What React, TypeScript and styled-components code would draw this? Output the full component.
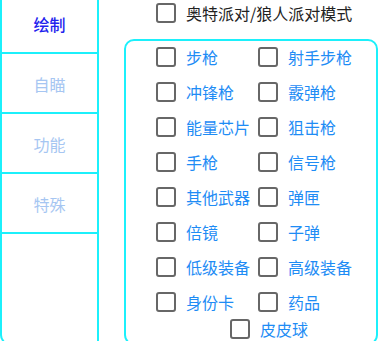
import React from "react";
import styled, { createGlobalStyle } from "styled-components";

const Global = createGlobalStyle`
  html, body { margin: 0; padding: 0; background: #ffffff; overflow: hidden; }
  body { font-family: "Noto Sans CJK SC", "Noto Sans", sans-serif; }
`;

const CYAN = "#1cf0fb";

const Page = styled.div`
  display: flex;
  align-items: flex-start;
  width: 388px;
  height: 341px;
  overflow: hidden;
`;

const Sidebar = styled.div`
  width: 99px;
  flex: none;
  box-sizing: border-box;
  margin-top: -6px;
  height: 351px;
  border: 2px solid ${CYAN};
  border-top: none;
  border-radius: 0 0 0 10px;
  display: flex;
  flex-direction: column;
`;

const Tab = styled.div<{ $active?: boolean }>`
  height: 60px;
  flex: none;
  box-sizing: border-box;
  border-bottom: 2px solid ${CYAN};
  display: flex;
  align-items: center;
  justify-content: center;
  font-size: 16px;
  color: ${(p) => (p.$active ? "#2222ee" : "#a6c6f2")};
  font-weight: ${(p) => (p.$active ? 500 : 400)};
  padding-top: 1px;
`;

const Main = styled.div`
  flex: 1;
  display: flex;
  flex-direction: column;
`;

const TopRow = styled.label`
  display: flex;
  align-items: center;
  gap: 10px;
  height: 26px;
  flex: none;
  padding-left: 57px;
  font-size: 16px;
  color: #222222;
`;

const Box = styled.span`
  width: 20px;
  height: 20px;
  box-sizing: border-box;
  border: 2px solid #676767;
  border-radius: 3px;
  flex: none;
`;

const Panel = styled.div`
  flex: none;
  margin-top: 13px;
  margin-left: 25px;
  width: 254px;
  height: 306px;
  box-sizing: border-box;
  border: 2px solid ${CYAN};
  border-radius: 10px;
  padding-left: 30px;
  display: flex;
  flex-direction: column;
`;

const Grid = styled.div`
  display: grid;
  grid-template-columns: 102px 102px;
  grid-auto-rows: 34.9px;
  margin-top: -1px;
`;

const Item = styled.label`
  display: flex;
  align-items: center;
  gap: 10px;
  font-size: 16px;
  color: #1e8cf5;
  white-space: nowrap;
`;

const LastRow = styled.div`
  display: flex;
  padding-left: 74px;
  height: 20px;
`;

const items = [
  "步枪", "射手步枪",
  "冲锋枪", "霰弹枪",
  "能量芯片", "狙击枪",
  "手枪", "信号枪",
  "其他武器", "弹匣",
  "倍镜", "子弹",
  "低级装备", "高级装备",
  "身份卡", "药品",
];

export default function App() {
  return (
    <>
      <Global />
      <Page>
        <Sidebar>
          <Tab $active>绘制</Tab>
          <Tab>自瞄</Tab>
          <Tab>功能</Tab>
          <Tab>特殊</Tab>
        </Sidebar>
        <Main>
          <TopRow>
            <Box />
            奥特派对/狼人派对模式
          </TopRow>
          <Panel>
            <Grid>
              {items.map((t) => (
                <Item key={t}>
                  <Box />
                  {t}
                </Item>
              ))}
            </Grid>
            <LastRow>
              <Item>
                <Box />
                皮皮球
              </Item>
            </LastRow>
          </Panel>
        </Main>
      </Page>
    </>
  );
}
